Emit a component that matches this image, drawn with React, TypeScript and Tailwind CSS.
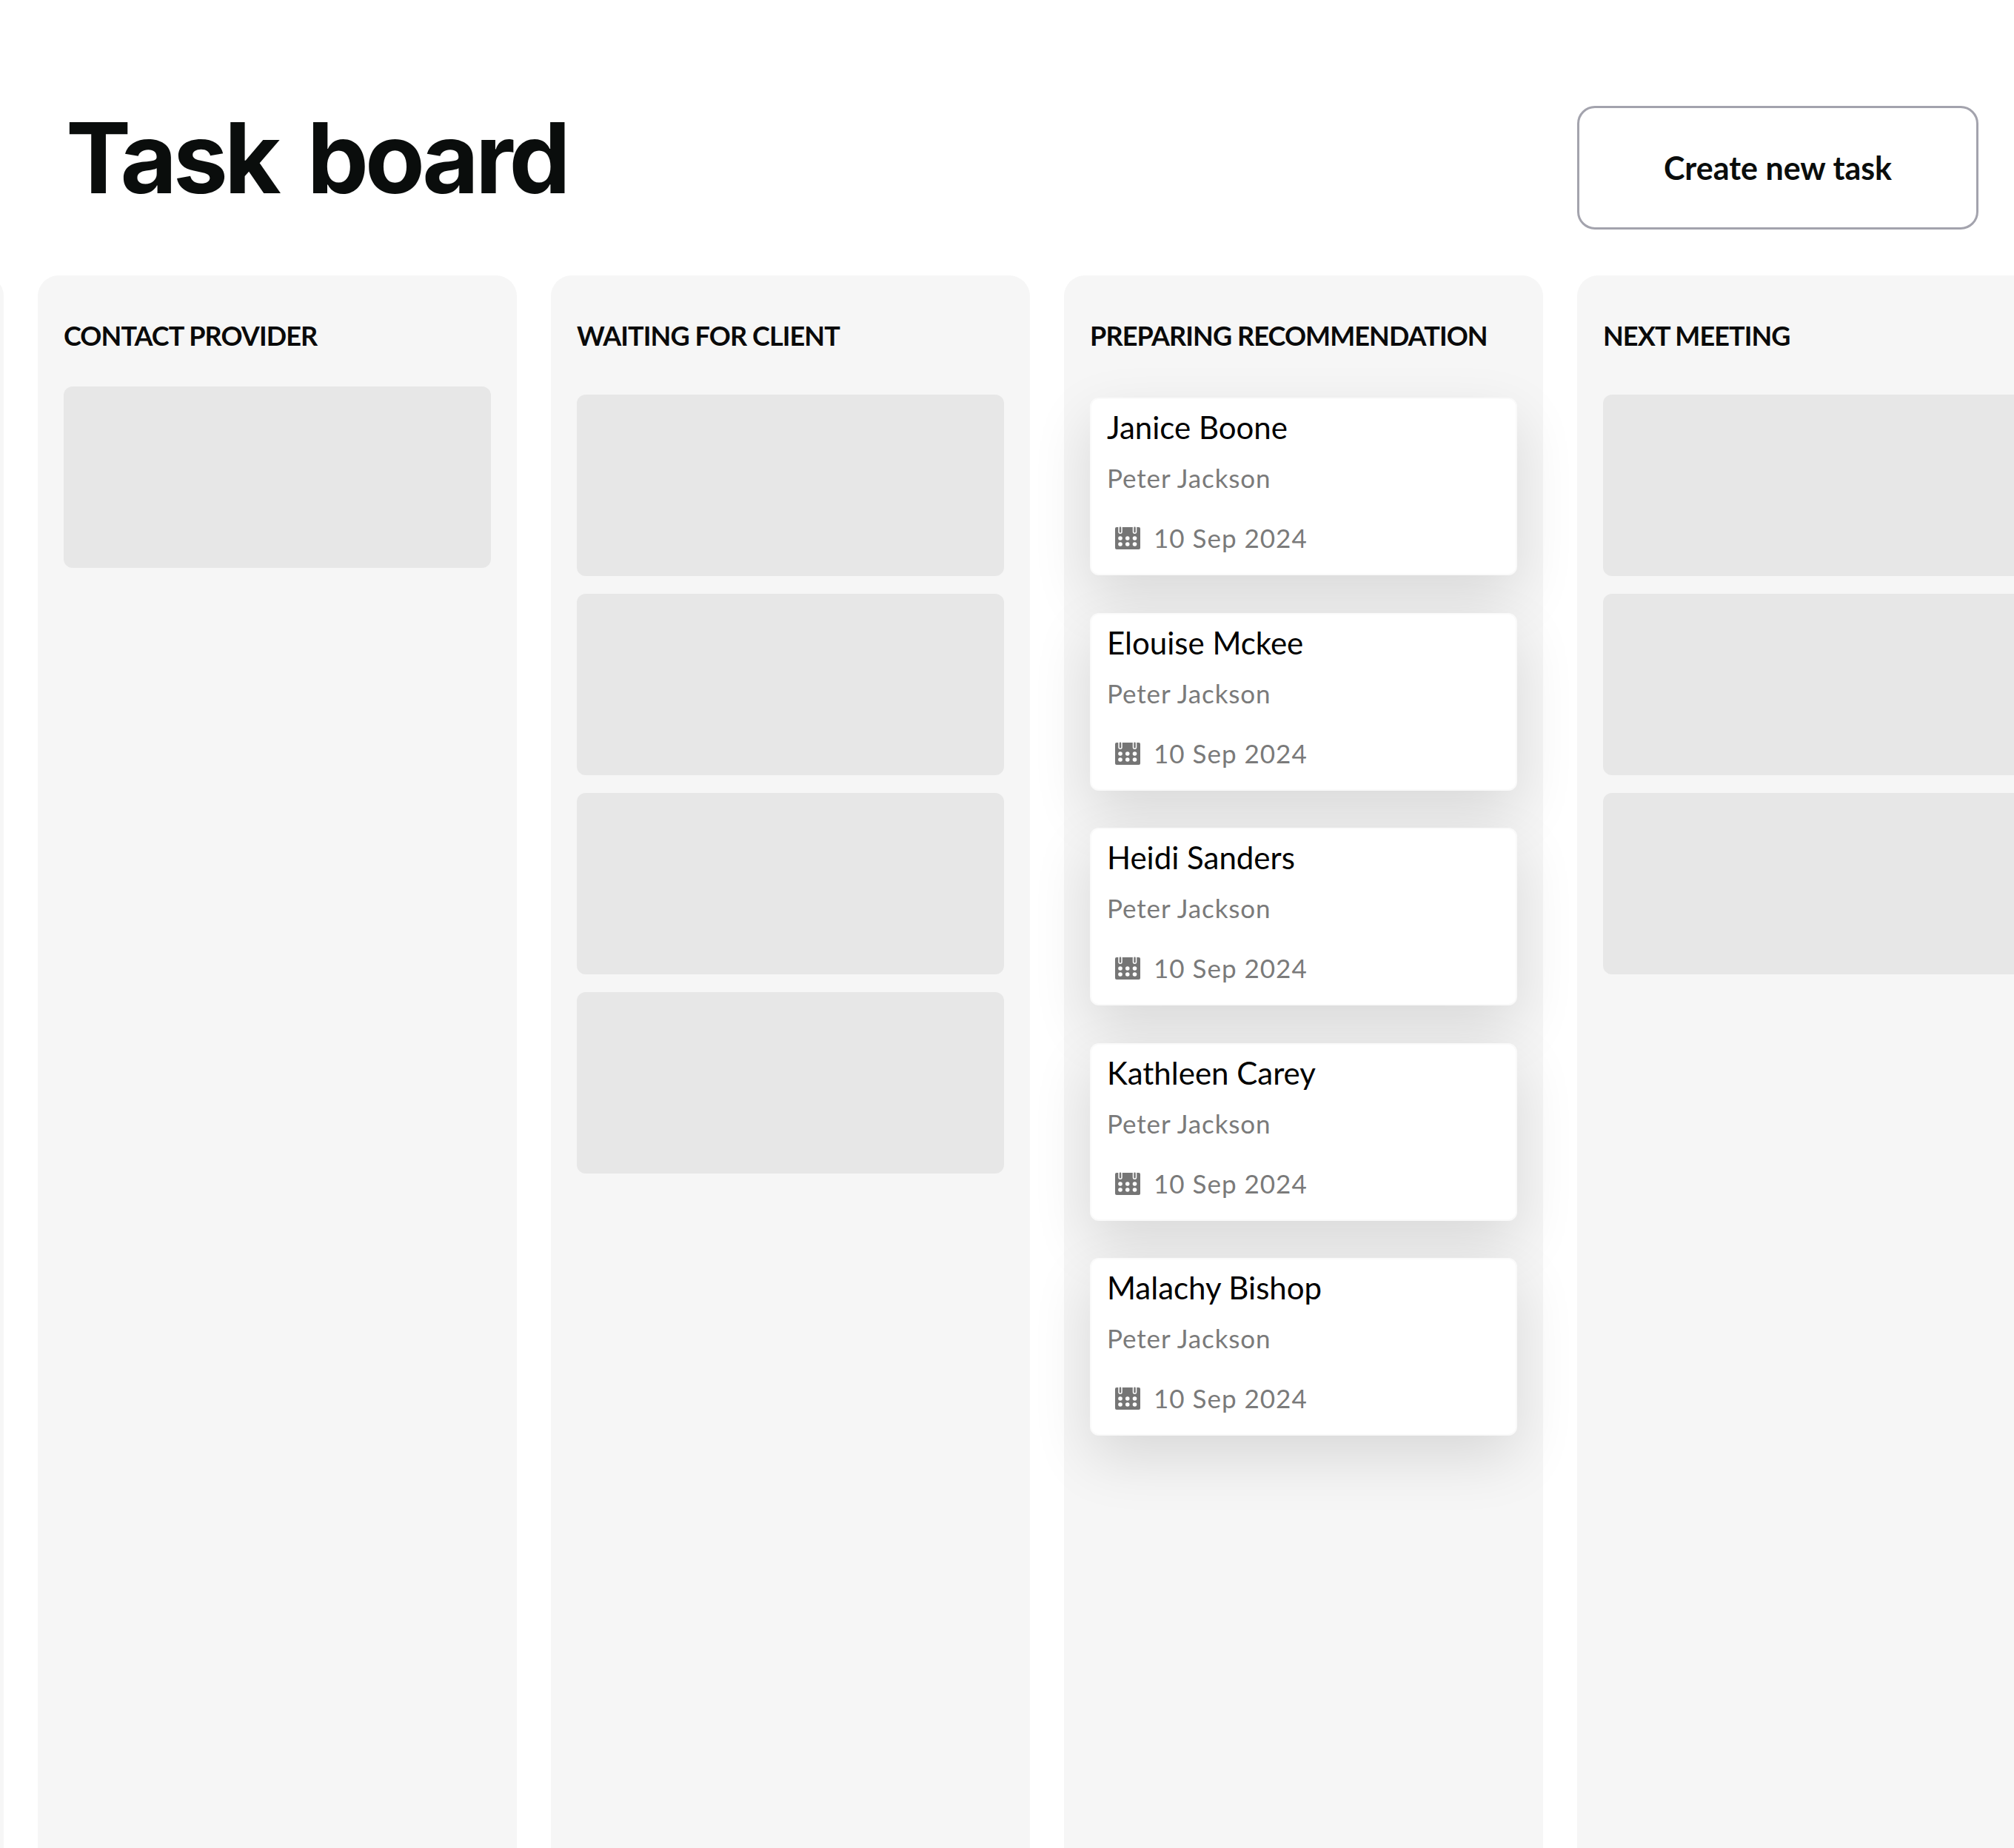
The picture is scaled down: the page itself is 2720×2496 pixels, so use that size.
const people = ['Janice Boone', 'Elouise Mckee', 'Heidi Sanders', 'Kathleen Carey', 'Malachy Bishop'];

const CalendarIcon = () => (
  <svg viewBox="0 0 34 32" className="w-[34px] h-[32px] shrink-0" fill="none">
    <path d="M2 2h30a2 2 0 0 1 2 2v26a2 2 0 0 1-2 2H2a2 2 0 0 1-2-2V4a2 2 0 0 1 2-2z" fill="#757575" />
    <rect x="5" y="0.75" width="4" height="9.5" rx="2" fill="#757575" stroke="#fff" strokeWidth="1.5" />
    <rect x="24.5" y="0.75" width="4" height="9.5" rx="2" fill="#757575" stroke="#fff" strokeWidth="1.5" />
    {[7, 16.75, 26.5].map((cx) =>
      [17, 25].map((cy) => <circle key={`${cx}-${cy}`} cx={cx} cy={cy} r="2.8" fill="#fff" />)
    )}
  </svg>
);

const Placeholder = () => <div className="h-[245px] rounded-xl bg-[#e7e7e7]" />;

const TaskCard = ({ name }: { name: string }) => (
  <div className="h-[240px] rounded-xl bg-white border-2 border-[#fafafa] pl-[21px] pt-[12px] shadow-[0_30px_80px_rgba(0,0,0,0.12)]">
    <p className="text-[42px] leading-[52px] text-black">{name}</p>
    <p className="mt-[20px] text-[35px] leading-[44px] tracking-[0.9px] text-[#7a7a7a]">Peter Jackson</p>
    <div className="mt-[37px] ml-[11px] flex items-center gap-[18px]">
      <CalendarIcon />
      <span className="text-[35px] leading-[44px] tracking-[1px] text-[#7a7a7a]">10 Sep 2024</span>
    </div>
  </div>
);

const Column = ({ title, listClass, children }: { title?: string; listClass?: string; children?: React.ReactNode }) => (
  <section className="w-[647px] h-[2200px] shrink-0 rounded-[28px] bg-[#f6f6f6] px-[35px] pt-[60px]">
    <h2 className="h-[42px] text-[36px] leading-[42px] font-bold tracking-[-0.9px] text-[#0a0a0a] whitespace-nowrap">{title}</h2>
    <div className={listClass}>{children}</div>
  </section>
);

export default function App() {
  return (
    <div className="w-[2720px] h-[2496px] overflow-hidden bg-white font-['Lato',sans-serif]">
      <header className="h-[372px] flex items-start justify-between pl-[89px] pr-[48px]">
        <h1 className="mt-[133px] font-['Inter',sans-serif] text-[132px] leading-[160px] tracking-[-5px] [word-spacing:14px] font-bold text-[#0a0d0c]">Task board</h1>
        <button className="mt-[143px] w-[542px] h-[167px] pt-[2px] rounded-[24px] border-[3px] border-[#a3a3ad] bg-white text-[43px] font-bold text-[#0a0d0c]">
          Create new task
        </button>
      </header>
      <main className="flex gap-[46px] -ml-[642px]">
        <Column />
        <Column title="CONTACT PROVIDER" listClass="mt-[48px]">
          <Placeholder />
        </Column>
        <Column title="WAITING FOR CLIENT" listClass="mt-[59px] flex flex-col gap-[24px]">
          <Placeholder />
          <Placeholder />
          <Placeholder />
          <Placeholder />
        </Column>
        <Column title="PREPARING RECOMMENDATION" listClass="mt-[63px] flex flex-col gap-[50.5px]">
          {people.map((name) => (
            <TaskCard key={name} name={name} />
          ))}
        </Column>
        <Column title="NEXT MEETING" listClass="mt-[59px] flex flex-col gap-[24px]">
          <Placeholder />
          <Placeholder />
          <Placeholder />
        </Column>
      </main>
    </div>
  );
}
